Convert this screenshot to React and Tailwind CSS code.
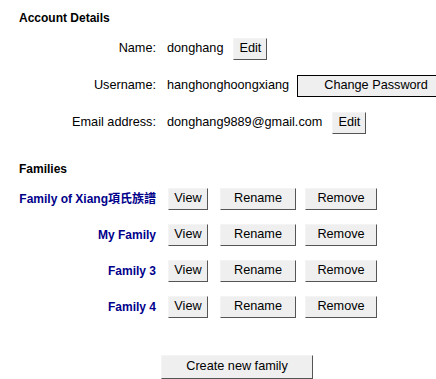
import React from 'react'

const Btn = ({ children, className = '' }) => (
  <button
    className={
      'h-[22px] bg-[#efefef] border border-t-[#f4f4f4] border-l-[#f4f4f4] border-r-[#555] border-b-[#555] text-[12.7px] text-black ' +
      className
    }
  >
    {children}
  </button>
)

const families = ['Family of Xiang項氏族譜', 'My Family', 'Family 3', 'Family 4']

const App = () => {
  return (
    <div
      className="w-[436px] h-[379px] overflow-hidden bg-white text-[12.7px] text-black"
      style={{ fontFamily: '"Liberation Sans", Arial, "Noto Sans CJK TC", sans-serif' }}
    >
      <h2 className="pl-[19px] pt-[9px] font-bold text-[12px]">Account Details</h2>

      <div className="grid grid-cols-[156px_auto] gap-x-[11px] gap-y-[15px] mt-[11px]">
        <div className="text-right self-center">Name:</div>
        <div className="flex items-center gap-[10px]">
          <span>donghang</span>
          <Btn className="w-[34px]">Edit</Btn>
        </div>

        <div className="text-right self-center">Username:</div>
        <div className="flex items-center gap-[8px]">
          <span>hanghonghoongxiang</span>
          <Btn className="w-[158px] shrink-0 !border-black">Change Password</Btn>
        </div>

        <div className="text-right self-center">Email address:</div>
        <div className="flex items-center gap-[10px]">
          <span>donghang9889@gmail.com</span>
          <Btn className="w-[34px]">Edit</Btn>
        </div>
      </div>

      <h2 className="pl-[19px] mt-[26px] font-bold text-[12px]">Families</h2>

      <div className="flex flex-col gap-[14px] mt-[10px]">
        {families.map((f) => (
          <div key={f} className="flex items-center">
            <div className="w-[156px] text-right font-bold text-[12px] text-[#00008b]">{f}</div>
            <div className="flex items-center ml-[12px]">
              <Btn className="w-[40px]">View</Btn>
              <Btn className="w-[76px] ml-[12px]">Rename</Btn>
              <Btn className="w-[72px] ml-[9px]">Remove</Btn>
            </div>
          </div>
        ))}
      </div>

      <div className="flex mt-[37px] pl-[161px]">
        <Btn className="w-[152px] h-[24px]">Create new family</Btn>
      </div>
    </div>
  )
}

export default App
